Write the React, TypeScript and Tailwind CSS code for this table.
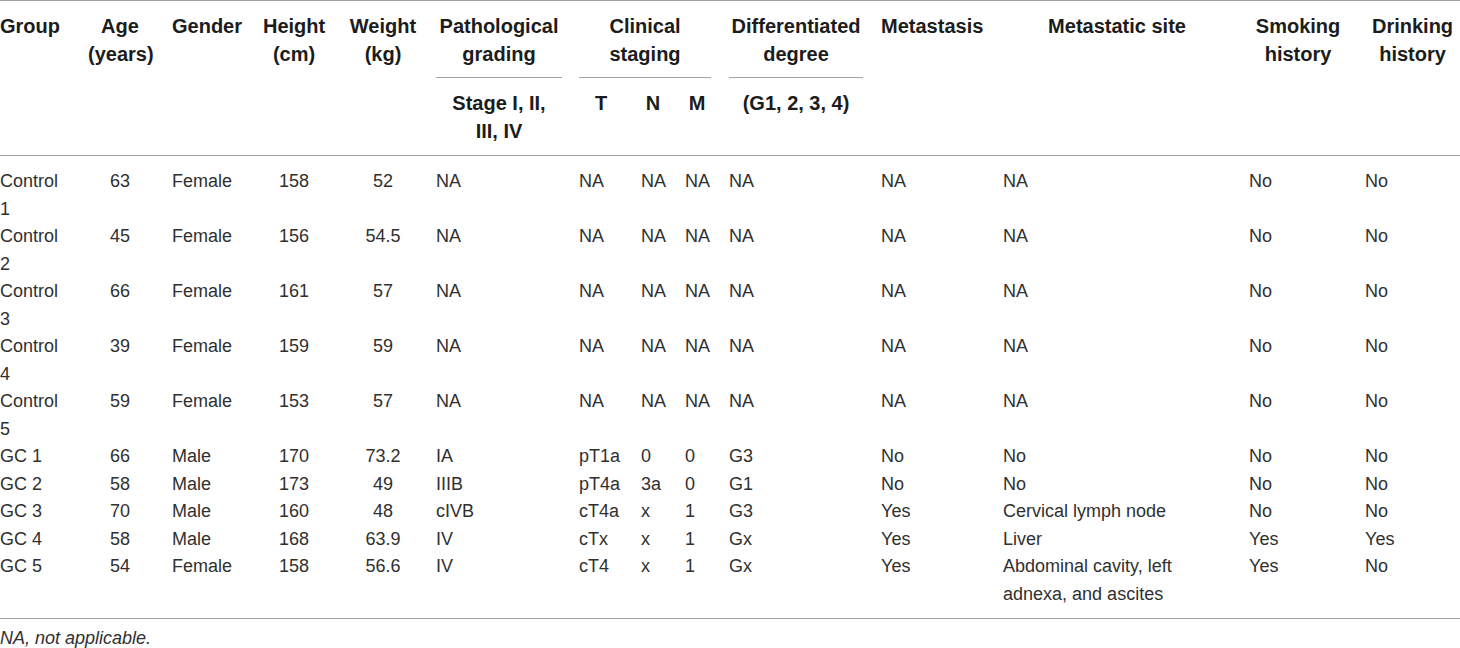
import React from 'react';

type Row = {
  group: React.ReactNode;
  age: string;
  gender: string;
  height: string;
  weight: string;
  grading: string;
  t: string;
  n: string;
  m: string;
  diff: string;
  meta: string;
  site: React.ReactNode;
  smoking: string;
  drinking: string;
};

const controls: Row[] = [1, 2, 3, 4, 5].map((i, idx) => ({
  group: (
    <>
      Control
      <br />
      {i}
    </>
  ),
  age: ['63', '45', '66', '39', '59'][idx],
  gender: 'Female',
  height: ['158', '156', '161', '159', '153'][idx],
  weight: ['52', '54.5', '57', '59', '57'][idx],
  grading: 'NA',
  t: 'NA',
  n: 'NA',
  m: 'NA',
  diff: 'NA',
  meta: 'NA',
  site: 'NA',
  smoking: 'No',
  drinking: 'No',
}));

const patients: Row[] = [
  { group: 'GC 1', age: '66', gender: 'Male', height: '170', weight: '73.2', grading: 'IA', t: 'pT1a', n: '0', m: '0', diff: 'G3', meta: 'No', site: 'No', smoking: 'No', drinking: 'No' },
  { group: 'GC 2', age: '58', gender: 'Male', height: '173', weight: '49', grading: 'IIIB', t: 'pT4a', n: '3a', m: '0', diff: 'G1', meta: 'No', site: 'No', smoking: 'No', drinking: 'No' },
  { group: 'GC 3', age: '70', gender: 'Male', height: '160', weight: '48', grading: 'cIVB', t: 'cT4a', n: 'x', m: '1', diff: 'G3', meta: 'Yes', site: 'Cervical lymph node', smoking: 'No', drinking: 'No' },
  { group: 'GC 4', age: '58', gender: 'Male', height: '168', weight: '63.9', grading: 'IV', t: 'cTx', n: 'x', m: '1', diff: 'Gx', meta: 'Yes', site: 'Liver', smoking: 'Yes', drinking: 'Yes' },
  {
    group: 'GC 5', age: '54', gender: 'Female', height: '158', weight: '56.6', grading: 'IV', t: 'cT4', n: 'x', m: '1', diff: 'Gx', meta: 'Yes',
    site: (
      <>
        Abdominal cavity, left
        <br />
        adnexa, and ascites
      </>
    ),
    smoking: 'Yes', drinking: 'No',
  },
];

const rows = [...controls, ...patients];

const widths = [80, 84, 91, 86, 87, 143, 62, 44, 44, 152, 122, 246, 116, 103];

export default function App() {
  const th = 'align-top p-0 font-bold text-[20px] leading-[27.5px] text-[#1c1c1c]';
  return (
    <div
      className="w-[1460px] h-[648px] bg-white overflow-hidden"
      style={{ fontFamily: '"Liberation Sans", Arial, Helvetica, sans-serif' }}
    >
      <table className="table-fixed border-collapse w-[1460px]">
        <colgroup>
          {widths.map((w, i) => (
            <col key={i} style={{ width: w }} />
          ))}
        </colgroup>
        <thead>
          <tr className="border-t border-[#a3a3a3]">
            <th rowSpan={2} className={`${th} pt-[12px] text-left`}>Group</th>
            <th rowSpan={2} className={`${th} pt-[12px] pl-2 pr-3 text-center`}>
              Age
              <br />
              (years)
            </th>
            <th rowSpan={2} className={`${th} pt-[12px] pl-2 text-left`}>Gender</th>
            <th rowSpan={2} className={`${th} pt-[12px] pl-2 pr-4 text-center`}>
              Height
              <br />
              (cm)
            </th>
            <th rowSpan={2} className={`${th} pt-[12px] pl-2 pr-[11px] text-center`}>
              Weight
              <br />
              (kg)
            </th>
            <th className={`${th} pt-[12px] pl-2 pr-[9px] text-center`}>
              <div className="border-b border-[#a3a3a3] pb-[9px]">
                Pathological
                <br />
                grading
              </div>
            </th>
            <th colSpan={3} className={`${th} pt-[12px] pl-2 pr-[10px] text-center`}>
              <div className="border-b border-[#a3a3a3] pb-[9px]">
                Clinical
                <br />
                staging
              </div>
            </th>
            <th className={`${th} pt-[12px] pl-2 pr-[10px] text-center`}>
              <div className="border-b border-[#a3a3a3] pb-[9px]">
                Differentiated
                <br />
                degree
              </div>
            </th>
            <th rowSpan={2} className={`${th} pt-[12px] pl-2 text-left`}>Metastasis</th>
            <th rowSpan={2} className={`${th} pt-[12px] pl-2 pr-[10px] text-center`}>Metastatic site</th>
            <th rowSpan={2} className={`${th} pt-[12px] pl-2 pr-[10px] text-center`}>
              Smoking
              <br />
              history
            </th>
            <th rowSpan={2} className={`${th} pt-[12px] pl-2 text-center`}>
              Drinking
              <br />
              history
            </th>
          </tr>
          <tr className="border-b border-[#a3a3a3]">
            <th className={`${th} pt-[12px] pb-[10px] pl-2 pr-[9px] text-center`}>
              Stage I, II,
              <br />
              III, IV
            </th>
            <th className={`${th} pt-[12px] pl-2 pr-[10px] text-center`}>T</th>
            <th className={`${th} pt-[12px] pl-2 pr-3 text-center`}>N</th>
            <th className={`${th} pt-[12px] pl-2 pr-3 text-center`}>M</th>
            <th className={`${th} pt-[12px] pl-2 pr-[10px] text-center`}>(G1, 2, 3, 4)</th>
          </tr>
        </thead>
        <tbody className="border-b border-[#a3a3a3] text-[18px] leading-[27.5px] text-[#303030]">
          {rows.map((r, i) => {
            const pad = i === 0 ? 'pt-[12px]' : i === rows.length - 1 ? 'pb-[10px]' : '';
            const td = `align-top p-0 ${pad}`;
            return (
              <tr key={i}>
                <td className={`${td} text-left`}>{r.group}</td>
                <td className={`${td} pl-2 pr-3 text-center`}>{r.age}</td>
                <td className={`${td} pl-2`}>{r.gender}</td>
                <td className={`${td} pl-2 pr-4 text-center`}>{r.height}</td>
                <td className={`${td} pl-2 pr-[11px] text-center`}>{r.weight}</td>
                <td className={`${td} pl-2`}>{r.grading}</td>
                <td className={`${td} pl-2`}>{r.t}</td>
                <td className={`${td} pl-2`}>{r.n}</td>
                <td className={`${td} pl-2`}>{r.m}</td>
                <td className={`${td} pl-2`}>{r.diff}</td>
                <td className={`${td} pl-2`}>{r.meta}</td>
                <td className={`${td} pl-2`}>{r.site}</td>
                <td className={`${td} pl-2`}>{r.smoking}</td>
                <td className={`${td} pl-2`}>{r.drinking}</td>
              </tr>
            );
          })}
        </tbody>
      </table>
      <p className="pt-[8px] text-[18px] leading-[22px] italic text-[#303030]">NA, not applicable.</p>
    </div>
  );
}
